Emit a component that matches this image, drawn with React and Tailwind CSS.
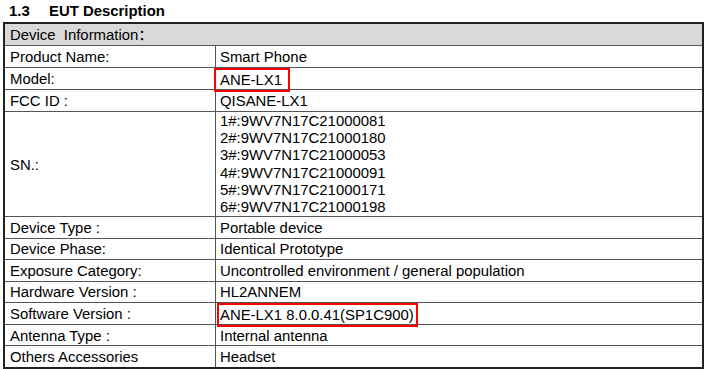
const serials = [
  "1#:9WV7N17C21000081",
  "2#:9WV7N17C21000180",
  "3#:9WV7N17C21000053",
  "4#:9WV7N17C21000091",
  "5#:9WV7N17C21000171",
  "6#:9WV7N17C21000198",
];

const rowsTop = [
  { label: "Product Name:", value: "Smart Phone" },
  { label: "Model:", value: "ANE-LX1", boxed: "model" },
  { label: "FCC ID :", value: "QISANE-LX1" },
];

const rowsBottom = [
  { label: "Device Type :", value: "Portable device" },
  { label: "Device Phase:", value: "Identical Prototype" },
  { label: "Exposure Category:", value: "Uncontrolled environment / general population" },
  { label: "Hardware Version :", value: "HL2ANNEM" },
  { label: "Software Version :", value: "ANE-LX1 8.0.0.41(SP1C900)", boxed: "software" },
  { label: "Antenna Type :", value: "Internal antenna" },
  { label: "Others Accessories", value: "Headset" },
];

const Row = ({ label, value, boxed, tall }) => {
  return (
    <div className={`flex border-t border-[#555] ${tall ? "h-[22px]" : "h-[21.57px]"}`}>
      <div className="w-[211px] shrink-0 border-r border-[#555] pl-[5px] pt-[2px] flex items-center">
        {label}
      </div>
      <div className="flex-1 flex items-center pl-[4px] pt-[2px]">
        {boxed === "model" ? (
          <span className="relative z-10 -ml-[6px] mt-[1px] h-[24px] flex items-center border-2 border-[#ff0000] pl-[4px] pr-[6px]">
            {value}
          </span>
        ) : boxed === "software" ? (
          <span className="relative z-10 -ml-[3px] mt-[1px] h-[24px] flex items-center border-2 border-[#ff0000] pl-[1px] pr-[2px]">
            {value}
          </span>
        ) : (
          value
        )}
      </div>
    </div>
  );
};

export default function App() {
  return (
    <div
      className="bg-white text-black text-[14.9px] leading-[17px] w-[706px] h-[369px] overflow-hidden"
      style={{ fontFamily: '"Liberation Sans", Arial, "Noto Sans CJK SC", sans-serif' }}
    >
      <div className="h-[22px] flex items-center pl-[9px] font-bold">
        <span className="w-[40px]">1.3</span>
        <span>EUT Description</span>
      </div>

      <div className="ml-[3px] w-[701px] border-2 border-[#222]">
        <div className="h-[21px] bg-[#d9d9d9] flex items-center pl-[5px] pt-[2px] whitespace-pre">
          Device  Information：
        </div>

        {rowsTop.map((row) => (
          <Row key={row.label} tall {...row} />
        ))}

        {/* serial numbers */}
        <div className="flex h-[105px] border-t border-[#555]">
          <div className="w-[211px] shrink-0 border-r border-[#555] pl-[5px] pt-[2px] flex items-center">
            SN.:
          </div>
          <div className="flex-1 pl-[4px] pt-[1px] flex flex-col">
            {serials.map((sn) => (
              <div key={sn} className="h-[17.2px]">
                {sn}
              </div>
            ))}
          </div>
        </div>

        {rowsBottom.map((row) => (
          <Row key={row.label} {...row} />
        ))}
      </div>
    </div>
  );
}
